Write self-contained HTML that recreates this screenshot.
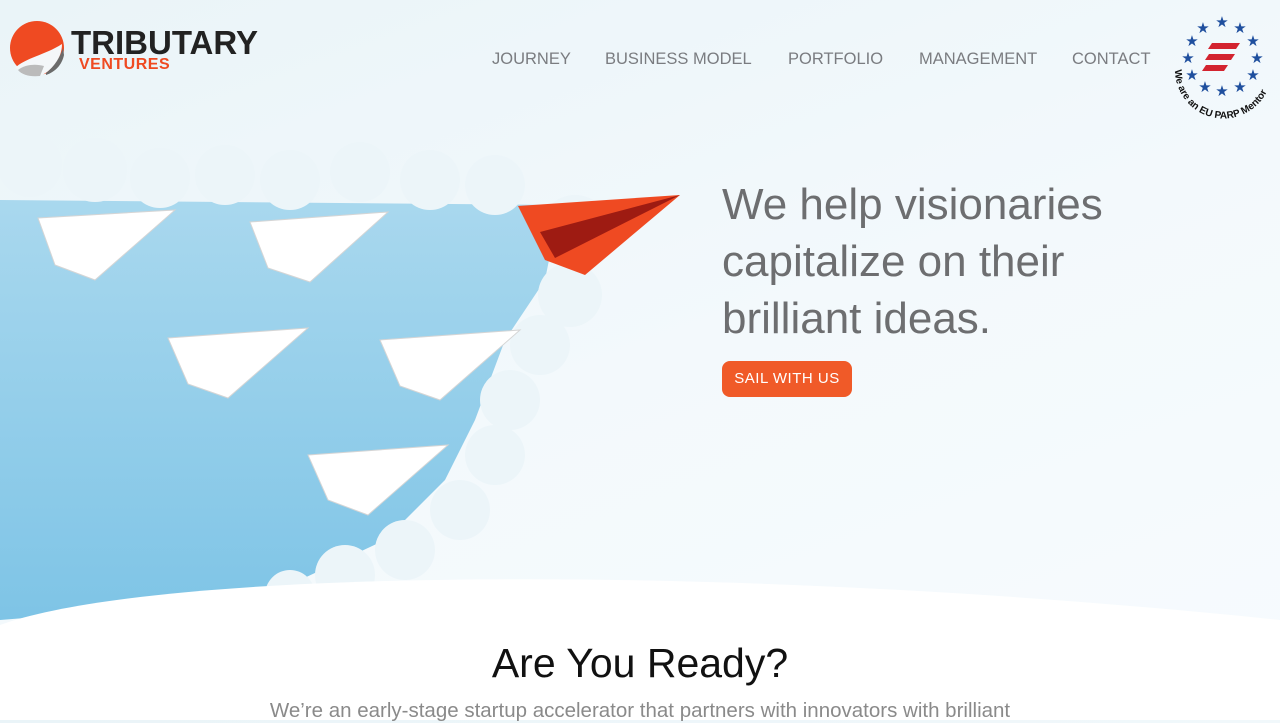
<!DOCTYPE html>
<html><head><meta charset="utf-8"><style>
*{margin:0;padding:0;box-sizing:border-box}
body{width:1280px;height:720px;overflow:hidden;font-family:"Liberation Sans",sans-serif;background:linear-gradient(160deg,#eaf4f8 0%,#f3f9fc 50%,#f7fbfe 100%);position:relative}
.nav{position:absolute;top:50px;font-size:16.5px;color:#7a7c80}
h1{position:absolute;left:722px;top:176px;font-size:44px;line-height:57px;color:#6d6e70;font-weight:normal}
.btn{position:absolute;left:722px;top:361px;width:130px;height:36px;background:#f05a28;border-radius:8px;color:#fff;font-size:15px;letter-spacing:.5px;text-align:center;line-height:36px}
h2{position:absolute;left:0;width:1280px;top:640px;text-align:center;font-size:41px;font-weight:normal;color:#111}
p{position:absolute;left:0;width:1280px;top:699px;text-align:center;font-size:20.5px;color:#8a8a8a}
</style></head><body>
<svg width="1280" height="720" style="position:absolute;left:0;top:0">
<defs><linearGradient id="sky" x1="0" y1="0" x2="0" y2="1"><stop offset="0" stop-color="#a9d8ee"/><stop offset="1" stop-color="#7ec4e6"/></linearGradient>
<path id="arc" d="M1175 70 A48 48 0 0 0 1272 70"/></defs>
<path d="M0 200 L560 205 L545 280 L505 340 L475 420 L445 480 L385 540 L300 580 L250 600 L0 620Z" fill="url(#sky)"/>
<g fill="#ecf5f9">
<circle cx="30" cy="165" r="32"/><circle cx="95" cy="170" r="32"/><circle cx="160" cy="178" r="30"/><circle cx="225" cy="175" r="30"/><circle cx="290" cy="180" r="30"/><circle cx="360" cy="172" r="30"/><circle cx="430" cy="180" r="30"/><circle cx="495" cy="185" r="30"/><circle cx="575" cy="230" r="35"/><circle cx="570" cy="295" r="32"/><circle cx="540" cy="345" r="30"/><circle cx="510" cy="400" r="30"/><circle cx="495" cy="455" r="30"/><circle cx="460" cy="510" r="30"/><circle cx="405" cy="550" r="30"/><circle cx="345" cy="575" r="30"/><circle cx="290" cy="595" r="25"/>
</g>
<g fill="#ffffff" stroke="#d5d5d5" stroke-width="1">
<polygon points="38,218 175,210 95,280 55,265"/><polygon points="250,222 388,212 310,282 268,268"/><polygon points="168,338 308,328 228,398 188,384"/><polygon points="380,340 520,330 440,400 400,386"/><polygon points="308,455 448,445 368,515 328,500"/>
</g>
<polygon points="518,206 680,195 585,275 545,260" fill="#ef4a22"/><polygon points="540,232 680,195 555,258" fill="#9e1b12"/>
<path d="M0 625 C150 570 700 560 1280 620 L1280 720 L0 720Z" fill="#fff"/>
<circle cx="37" cy="48" r="27" fill="#ef4a22"/><path d="M15 68 C25 58 45 55 62 44 C62 60 50 72 40 76 Z" fill="#f4f7f9"/><path d="M46 73 C55 66 60 57 63 48 L64 55 C62 65 55 72 46 75Z" fill="#6b6b6b"/><path d="M18 70 C26 64 36 64 44 66 L40 76 C30 77 22 75 18 70Z" fill="#bbb"/>
<g fill="#1f4f9e" font-size="15" text-anchor="middle"><text x="1222" y="27">★</text><text x="1203" y="33">★</text><text x="1240" y="33">★</text><text x="1192" y="46">★</text><text x="1253" y="46">★</text><text x="1188" y="63">★</text><text x="1257" y="63">★</text><text x="1192" y="80">★</text><text x="1253" y="80">★</text><text x="1205" y="92">★</text><text x="1240" y="92">★</text><text x="1222" y="96">★</text></g>
<g fill="#d3232f"><path d="M1212 43 h28 l-4 6 h-28z"/><path d="M1209 54 h26 l-4 6 h-26z"/><path d="M1206 65 h22 l-4 6 h-22z"/></g>
<text font-size="10" font-weight="bold" fill="#111"><textPath href="#arc">We are an EU PARP Mentor</textPath></text>
</svg>
<div style="position:absolute;left:71px;top:24px;font-size:33px;font-weight:bold;color:#222">TRIBUTARY</div>
<div style="position:absolute;left:79px;top:56px;font-size:16px;font-weight:bold;color:#ef4a22;letter-spacing:.5px">VENTURES</div>
<div class="nav" style="left:492px">JOURNEY</div>
<div class="nav" style="left:605px">BUSINESS MODEL</div>
<div class="nav" style="left:788px">PORTFOLIO</div>
<div class="nav" style="left:919px">MANAGEMENT</div>
<div class="nav" style="left:1072px">CONTACT</div>
<h1>We help visionaries<br>capitalize on their<br>brilliant ideas.</h1>
<div class="btn">SAIL WITH US</div>
<h2>Are You Ready?</h2>
<p>We’re an early-stage startup accelerator that partners with innovators with brilliant</p>
</body></html>
